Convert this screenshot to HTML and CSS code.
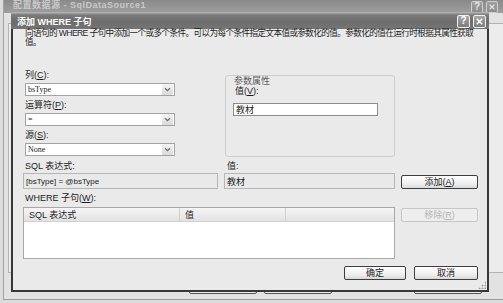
FILE: index.html
```html
<!DOCTYPE html>
<html lang="zh-CN">

<head>
    <meta charset="UTF-8">
    <meta name="viewport" content="width=device-width, initial-scale=1.0">
    <title>添加 WHERE 子句</title>
    <link rel="stylesheet" href="styles.css">
</head>

<body>
    <div class="desktop">
        <!-- wizard window behind the dialog -->
        <div class="back-window">
            <div class="back-title">
                <span class="back-caption">配置数据源 - SqlDataSource1</span>
                <span class="cap-btns">
                    <span class="cap-btn faded">?</span>
                    <span class="cap-btn faded">
                        <svg viewBox="0 0 10 10" width="8" height="8"><path d="M2 2 L8 8 M8 2 L2 8" stroke="#e6e6e6" stroke-width="1.6"/></svg>
                    </span>
                </span>
            </div>
            <div class="back-body">
                <div class="back-panel"></div>
                <div class="back-buttons">
                    <span class="back-btn"></span>
                    <span class="back-btn"></span>
                    <span class="back-btn"></span>
                    <span class="back-btn"></span>
                </div>
            </div>
        </div>

        <div class="dialog">
            <div class="titlebar">
                <span class="caption">添加 WHERE 子句</span>
                <span class="cap-btns">
                    <span class="cap-btn">?</span>
                    <span class="cap-btn">
                        <svg viewBox="0 0 10 10" width="9" height="9"><path d="M2 2 L8 8 M8 2 L2 8" stroke="#fff" stroke-width="1.7"/></svg>
                    </span>
                </span>
            </div>

            <div class="dialog-body">
                <p class="intro">向语句的 WHERE 子句中添加一个或多个条件。可以为每个条件指定文本值或参数化的值。参数化的值在运行时根据其属性获取值。</p>

                <div class="form-grid">
                    <div class="fields">
                        <label>列(<u>C</u>):</label>
                        <div class="combo"><span class="value">bsType</span><span class="drop"><svg viewBox="0 0 8 6" width="7" height="5"><path d="M1 1.5 L4 4.5 L7 1.5" fill="none" stroke="#6a6a6a" stroke-width="1.4"/></svg></span></div>
                        <label>运算符(<u>P</u>):</label>
                        <div class="combo"><span class="value">=</span><span class="drop"><svg viewBox="0 0 8 6" width="7" height="5"><path d="M1 1.5 L4 4.5 L7 1.5" fill="none" stroke="#6a6a6a" stroke-width="1.4"/></svg></span></div>
                        <label>源(<u>S</u>):</label>
                        <div class="combo"><span class="value">None</span><span class="drop"><svg viewBox="0 0 8 6" width="7" height="5"><path d="M1 1.5 L4 4.5 L7 1.5" fill="none" stroke="#6a6a6a" stroke-width="1.4"/></svg></span></div>
                    </div>

                    <div class="params">
                        <span class="params-title">参数属性</span>
                        <label>值(<u>V</u>):</label>
                        <div class="textbox">教材</div>
                    </div>

                    <label class="lbl-sql">SQL 表达式:</label>
                    <label class="lbl-val">值:</label>

                    <div class="readonly expr">[bsType] = @bsType</div>
                    <div class="readonly val">教材</div>
                    <button type="button" class="btn add">添加(<u>A</u>)</button>

                    <label class="lbl-where">WHERE 子句(<u>W</u>):</label>

                    <div class="list">
                        <div class="list-head">
                            <span class="col-sql">SQL 表达式</span>
                            <span class="col-val">值</span>
                            <span class="col-rest"></span>
                        </div>
                    </div>
                    <button type="button" class="btn remove" disabled>移除(<u>R</u>)</button>
                </div>

                <div class="actions">
                    <button type="button" class="btn ok">确定</button>
                    <button type="button" class="btn cancel">取消</button>
                </div>
            </div>
            <span class="grip"></span>
        </div>
    </div>
</body>

</html>
```

FILE: styles.css
```css
/* Reset */
* {
    margin: 0;
    padding: 0;
    box-sizing: border-box;
}

body {
    width: 503px;
    height: 303px;
    overflow: hidden;
    font-family: "Liberation Sans", "Noto Sans CJK SC", sans-serif;
    font-size: 9px;
    line-height: 10px;
    color: #1c1c1c;
    background: #dcdcdc;
}

u {
    text-decoration: underline;
}

.desktop {
    position: relative;
    width: 503px;
    height: 303px;
}

/* Window behind */
.back-window {
    height: 300px;
    margin-left: 3px;
    border-left: 1px solid #a2a2a2;
    border-bottom: 1px solid #9c9c9c;
    background: #e2e2e2;
    display: flex;
    flex-direction: column;
}

.back-title {
    height: 13px;
    display: flex;
    justify-content: space-between;
    align-items: flex-start;
    padding: 1px 5px 0 9px;
    background: linear-gradient(#8a8a8a, #9e9e9e);
    color: #c9c9c9;
    font-weight: bold;
    line-height: 8px;
}

.back-caption {
    letter-spacing: 0.5px;
}

.back-body {
    flex: 1;
    display: flex;
    flex-direction: column;
    padding: 10px 0 5px 4px;
}

.back-panel {
    flex: 1;
    border: 1px solid #b4b4b4;
    border-right: none;
    background: #ececec;
}

.back-buttons {
    display: flex;
    gap: 7px;
    padding: 6px 0 0 181px;
}

.back-btn {
    width: 68px;
    height: 15px;
    border: 1px solid #555;
    border-radius: 2px;
    background: #eee;
}

.back-btn:nth-child(3) {
    visibility: hidden;
}

/* Caption buttons */
.cap-btns {
    display: flex;
    gap: 3px;
}

.cap-btn {
    width: 13px;
    height: 13px;
    display: flex;
    align-items: center;
    justify-content: center;
    border: 1px solid #f2f2f2;
    border-radius: 2px;
    background: linear-gradient(#a6a6a6, #7c7c7c);
    color: #fff;
    font: bold 10px/10px "Liberation Sans", sans-serif;
}

.cap-btn.faded {
    width: 12px;
    height: 12px;
    border-color: #d0d0d0;
    background: linear-gradient(#a0a0a0, #8c8c8c);
    color: #e6e6e6;
}

/* Dialog */
.dialog {
    position: absolute;
    left: 11px;
    top: 12px;
    width: 478px;
    height: 280px;
    display: flex;
    flex-direction: column;
    background: #eaeaea;
    border: 2px solid #383838;
    border-top: none;
}

.titlebar {
    height: 17px;
    margin: 0 -2px;
    display: flex;
    justify-content: space-between;
    align-items: center;
    padding: 0 3px 0 6px;
    background: linear-gradient(#a4a4a4 0, #7a7a7a 2px, #6c6c6c 9px, #777 17px);
    border-top: 1px solid #b0b0b0;
}

.caption {
    color: #fff;
    font-weight: bold;
    padding-top: 2px;
}

.dialog-body {
    flex: 1;
    padding: 0 9px 0 10px;
}

.intro {
    padding-left: 2px;
    font-size: 8.6px;
    line-height: 9px;
    letter-spacing: -0.6px;
}

.form-grid {
    margin-top: 23px;
    display: grid;
    grid-template-columns: 195px 171px 77px;
    grid-template-rows: 87px 14px 18px 14px 56px;
    column-gap: 6px;
}

.form-grid label {
    display: block;
    height: 10px;
}

/* Left column: combos */
.fields {
    grid-area: 1 / 1;
    padding-left: 2px;
}

.fields label {
    margin-bottom: 3px;
}

.combo {
    width: 150px;
    height: 13px;
    margin-bottom: 4px;
    display: flex;
    align-items: center;
    justify-content: space-between;
    padding: 0 1px 0 2px;
    border: 1px solid #a3a3a3;
    background: #fff;
}

.combo .value {
    font-family: "Liberation Serif", serif;
    font-size: 8px;
}

.drop {
    width: 11px;
    height: 11px;
    display: flex;
    align-items: center;
    justify-content: center;
    background: linear-gradient(#f4f4f4, #dadada);
    border-radius: 1px;
}

/* Parameter group */
.params {
    grid-area: 1 / 2;
    margin: 5px 0 0 1px;
    height: 82px;
    padding: 0 8px;
    border: 1px solid #cdcdcd;
    border-radius: 3px;
}

.params-title {
    display: inline-block;
    margin: -6px 0 0 -2px;
    padding: 0 2px;
    background: #eaeaea;
    color: #5e5e5e;
}

.params label {
    padding-left: 1px;
}

.textbox {
    width: 145px;
    height: 13px;
    margin: 7px 0 0 -1px;
    padding: 1px 2px;
    border: 1px solid #8c8c8c;
    background: #fff;
    line-height: 10px;
}

/* Expression row */
.lbl-sql,
.lbl-val,
.lbl-where {
    align-self: end;
    padding-left: 2px;
}

.lbl-sql {
    grid-area: 2 / 1;
}

.lbl-val {
    grid-area: 2 / 2;
    padding-left: 3px;
}

.lbl-where {
    grid-area: 4 / 1 / 5 / 3;
}

.readonly {
    align-self: end;
    height: 16px;
    padding: 3px 2px 0;
    border: 1px solid #b6b6b6;
    background: #e9e9e9;
}

.readonly.expr {
    grid-area: 3 / 1;
    font-size: 8px;
}

.readonly.val {
    grid-area: 3 / 2;
}

/* List */
.list {
    grid-area: 5 / 1 / 6 / 3;
    align-self: end;
    height: 52px;
    border: 1px solid #a8a8a8;
    background: #fff;
}

.list-head {
    display: flex;
    height: 14px;
    background: linear-gradient(#f6f6f6, #e2e2e2);
    border-bottom: 1px solid #d2d2d2;
}

.list-head span {
    padding: 2px 0 0 5px;
    border-right: 1px solid #cfcfcf;
}

.col-sql {
    width: 156px;
}

.col-val {
    width: 106px;
}

.list-head .col-rest {
    flex: 1;
    border-right: none;
}

/* Buttons */
.btn {
    height: 14px;
    font: inherit;
    line-height: 10px;
    color: #1c1c1c;
    border: 1px solid #3e3e3e;
    border-radius: 2px;
    background: linear-gradient(#ffffff, #ececec 70%, #d8d8d8);
}

.btn.add {
    grid-area: 3 / 3;
    align-self: end;
}

.btn.remove {
    grid-area: 5 / 3;
    align-self: start;
    margin-top: 5px;
    border-color: #c6c6c6;
    color: #b4b4b4;
    background: #eeeeee;
}

.actions {
    margin-top: 7px;
    display: flex;
    justify-content: flex-end;
    gap: 8px;
}

.btn.ok {
    width: 62px;
}

.btn.cancel {
    width: 64px;
}

/* size grip in the corner */
.grip {
    position: absolute;
    right: 1px;
    bottom: 1px;
    width: 8px;
    height: 8px;
    background: radial-gradient(circle, #9a9a9a 0.8px, transparent 1.2px) 0 0 / 3px 3px;
    clip-path: polygon(100% 0, 100% 100%, 0 100%);
}
```
